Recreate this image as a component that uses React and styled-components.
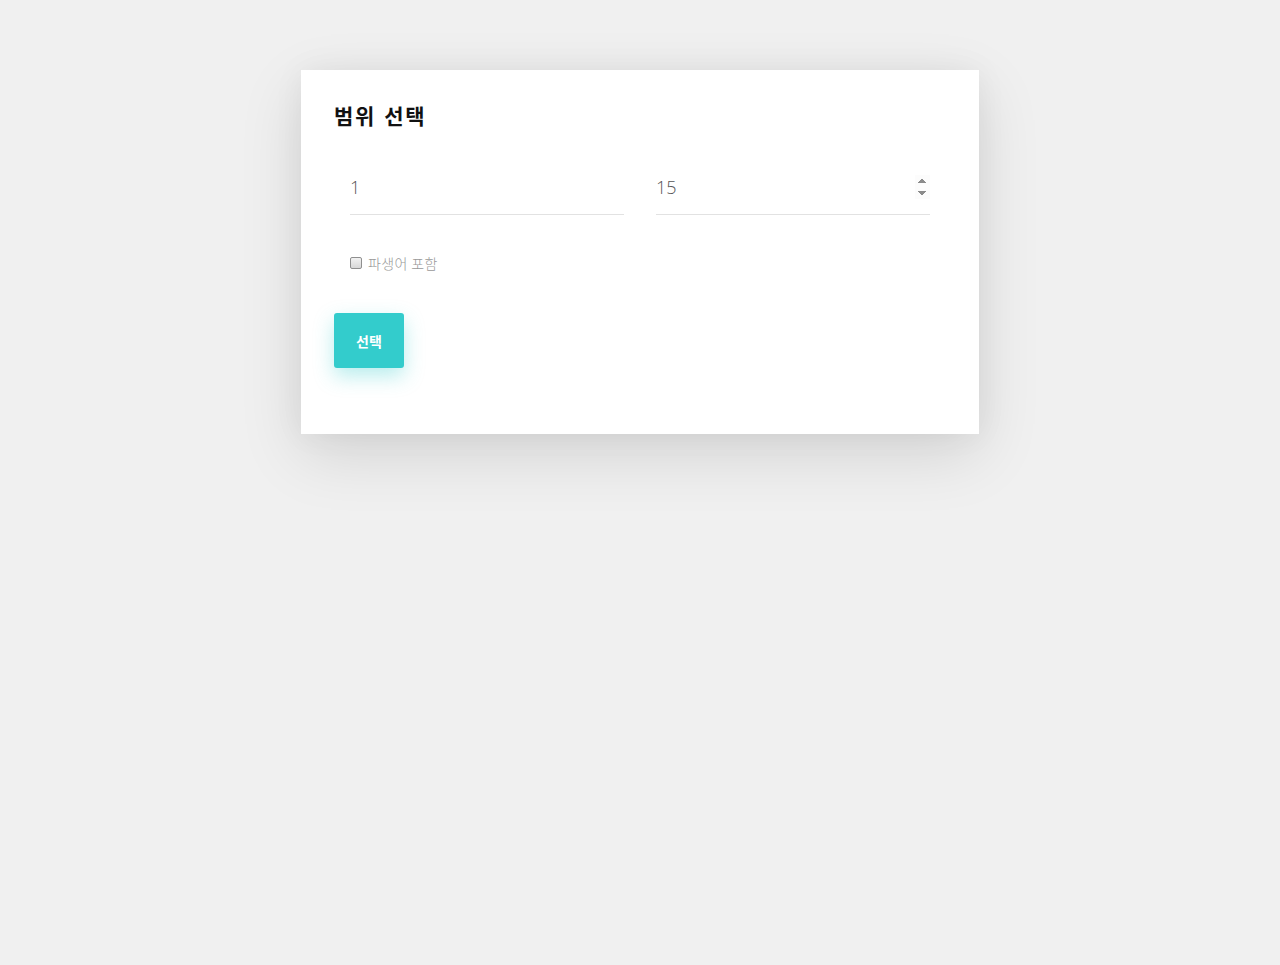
import React, { useState } from 'react';
import styled, { createGlobalStyle } from 'styled-components';

const GlobalStyle = createGlobalStyle`
	body {
		margin: 0;
		background: #f0f0f0;
		font-family: 'Open Sans', 'Noto Sans CJK KR', sans-serif;
	}
`;

const RangeSelect = () => {
	const [from, setFrom] = useState('1');
	const [to, setTo] = useState('15');
	const [derived, setDerived] = useState(false);

	return (
		<Page>
			<GlobalStyle />
			<Card>
				<Title>범위 선택</Title>
				<Row>
					<Field>
						<Input type="text" value={from} onChange={(e) => setFrom(e.target.value)} />
					</Field>
					<Field>
						<Input type="number" autoFocus value={to} onChange={(e) => setTo(e.target.value)} />
					</Field>
				</Row>
				<CheckLabel>
					<input type="checkbox" checked={derived} onChange={(e) => setDerived(e.target.checked)} />
					파생어 포함
				</CheckLabel>
				<Button>선택</Button>
			</Card>
		</Page>
	);
};

const Page = styled.div`
	min-height: 965px;
	padding-top: 70px;
	box-sizing: border-box;
	display: flex;
	justify-content: center;
	align-items: flex-start;
`;

const Card = styled.div`
	width: 678px;
	height: 364px;
	box-sizing: border-box;
	background: #fff;
	padding: 30px 33px;
	box-shadow: 0 20px 60px rgba(0, 0, 0, 0.12), 0 0 30px rgba(0, 0, 0, 0.05);
`;

const Title = styled.h2`
	margin: 0;
	font-family: 'Noto Sans CJK KR', sans-serif;
	font-size: 21px;
	font-weight: 700;
	line-height: 30px;
	color: #111;
	letter-spacing: 1.6px;
	word-spacing: 2px;
`;

const Row = styled.div`
	display: flex;
	margin-top: 34px;
`;

const Field = styled.div`
	flex: 1;
	padding: 0 16px;
`;

const Input = styled.input`
	width: 100%;
	box-sizing: border-box;
	height: 51px;
	border: none;
	border-bottom: 1px solid #e2e2e2;
	outline: none;
	padding: 0 0 5px;
	font-family: 'Open Sans', sans-serif;
	font-weight: 300;
	font-size: 18px;
	color: #555;
	background: transparent;
`;

const CheckLabel = styled.label`
	display: flex;
	align-items: center;
	gap: 6px;
	margin: 38px 0 0 16px;
	font-family: 'Noto Sans CJK KR', sans-serif;
	font-weight: 300;
	font-size: 14px;
	letter-spacing: 0.4px;
	color: #999;

	input {
		appearance: none;
		margin: 0;
		width: 12px;
		height: 12px;
		border: 1px solid #8f8f8f;
		border-radius: 2px;
		background: linear-gradient(#f2f2f2, #d8d8d8);
		box-sizing: border-box;
	}
`;

const Button = styled.button`
	display: block;
	margin-top: 40px;
	width: 70px;
	height: 55px;
	border: none;
	border-radius: 3px;
	background: #33cccc;
	color: #fff;
	font-family: 'Noto Sans CJK KR', sans-serif;
	font-weight: 700;
	font-size: 14px;
	box-shadow: 0 8px 20px rgba(51, 204, 204, 0.35);
	cursor: pointer;
`;

export default function App() {
	return <RangeSelect />;
}
